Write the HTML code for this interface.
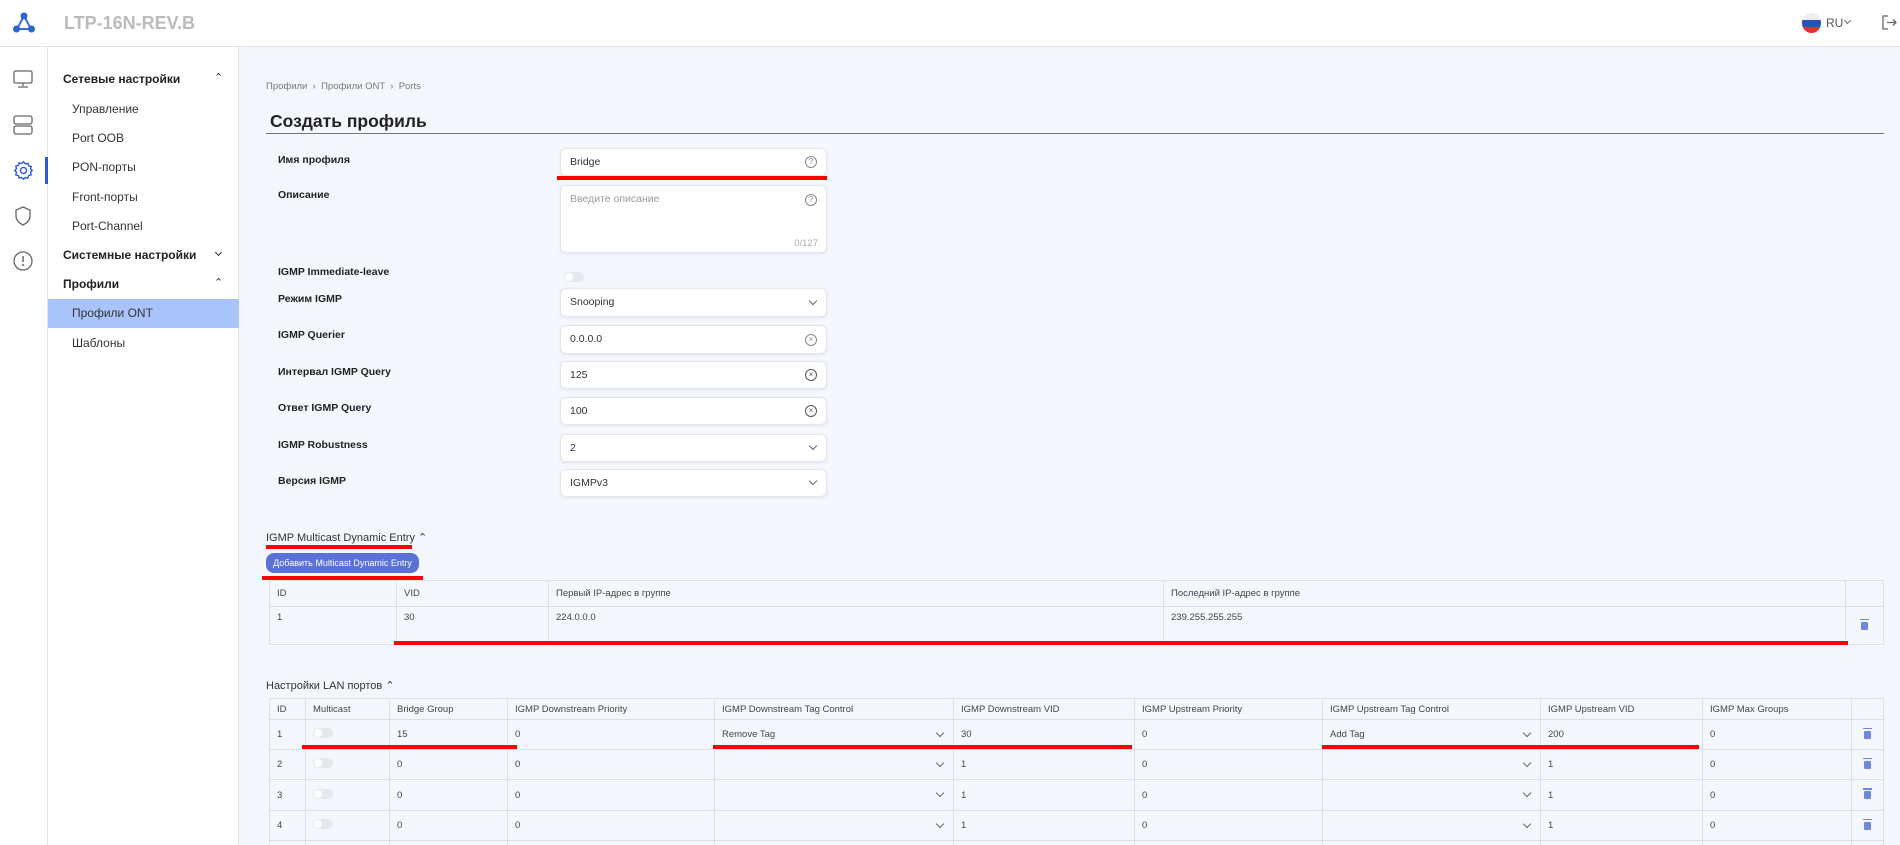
<!DOCTYPE html>
<html><head><meta charset="utf-8"><style>
*{box-sizing:border-box;margin:0;padding:0}
html,body{width:1900px;height:845px;overflow:hidden}
body{background:#f4f7fd;font-family:"Liberation Sans","Noto Sans CJK SC",sans-serif;color:#333}
#w{position:relative;width:1900px;height:845px;overflow:hidden}
.a{position:absolute}
.hdr{left:0;top:0;width:1900px;height:47px;background:#fff;border-bottom:1px solid #e2e4ea}
.icol{left:0;top:47px;width:48px;height:798px;background:#fff;border-right:1px solid #e2e4ea}
.nav{left:48px;top:47px;width:191px;height:798px;background:#fff;border-right:1px solid #e2e4ea}
.ni{position:absolute;left:24px;font-size:12px;color:#333}
.nh{position:absolute;left:15px;font-size:12px;font-weight:bold;color:#222}
.chev{position:absolute;left:166px;font-size:11px;color:#333}
.lbl{position:absolute;left:278px;font-size:10.5px;font-weight:bold;color:#222}
.inp{position:absolute;left:560px;width:267px;background:#fff;border:1px solid #e3e6ee;border-radius:6px;box-shadow:0 1px 3px rgba(0,0,0,.08);font-size:10.5px;color:#333;padding-left:9px}
.ic{position:absolute;right:9px;top:50%;margin-top:-6px;width:12px;height:12px;border:1px solid #888;border-radius:50%;font-size:8px;line-height:10px;text-align:center;color:#888}
.dd{position:absolute;right:10px;top:50%;margin-top:-5px;width:6px;height:6px;border-right:1.2px solid #666;border-bottom:1.2px solid #666;transform:rotate(45deg)}
.red{position:absolute;background:#f00;height:4px}
table{position:absolute;border-collapse:collapse;font-size:9.5px;color:#444;table-layout:fixed}
td{border:1px solid #dcdfe6;padding:0 7px;vertical-align:top}
.t2 td{vertical-align:middle}
.tg{display:inline-block;width:20px;height:10px;border-radius:5px;background:#e6e8ee;position:relative}
.tg:after{content:"";position:absolute;left:1px;top:1px;width:8px;height:8px;border-radius:50%;background:#fff}
.trash{display:inline-block;width:7px;height:8px;background:#7088dc;border-radius:1px;position:relative;margin-top:3px}
.trash:before{content:"";position:absolute;left:-1px;top:-3px;width:9px;height:1.5px;background:#7088dc}
.sc{position:relative}
</style></head><body><div id="w">
<div class="a hdr"></div>
<svg class="a" style="left:12px;top:12px" width="24" height="22" viewBox="0 0 24 22"><path d="M12 4 L5 17 L19 17 Z" fill="none" stroke="#3a6fd8" stroke-width="2"/><circle cx="12" cy="4" r="3.5" fill="#2f62cf"/><circle cx="4.5" cy="17" r="3.5" fill="#2f62cf"/><circle cx="19.5" cy="17" r="3.5" fill="#2f62cf"/></svg>
<div class="a" style="left:64px;top:13px;font-size:18px;color:#bbb;font-weight:bold">LTP-16N-REV.B</div>
<div class="a" style="left:1802px;top:13px;width:19px;height:20px;border-radius:50%;overflow:hidden"><div style="height:6.5px;background:#eee"></div><div style="height:7px;background:#2b50b8"></div><div style="height:7px;background:#e2302e"></div></div>
<div class="a" style="left:1826px;top:16px;font-size:12px;color:#555">RU</div>
<div class="a" style="left:1845px;top:18px;width:5px;height:5px;border-right:1.2px solid #666;border-bottom:1.2px solid #666;transform:rotate(45deg)"></div>
<svg class="a" style="left:1882px;top:15px" width="15" height="15" viewBox="0 0 15 15"><path d="M6 1H1v13h5M5 7.5h9M11 4.5l3 3-3 3" fill="none" stroke="#666" stroke-width="1.3"/></svg>
<div class="a icol"></div>
<svg class="a" style="left:13px;top:70px" width="20" height="18"><rect x="1" y="1" width="18" height="12" rx="1.5" fill="none" stroke="#666" stroke-width="1.3"/><path d="M10 13v3M5 17h10" stroke="#666" stroke-width="1.3"/></svg>
<svg class="a" style="left:13px;top:115px" width="20" height="20"><rect x="1" y="1" width="18" height="8" rx="2" fill="none" stroke="#666" stroke-width="1.3"/><rect x="1" y="11" width="18" height="8" rx="2" fill="none" stroke="#666" stroke-width="1.3"/></svg>
<div class="a" style="left:45px;top:157px;width:3px;height:27px;background:#2f5bd0"></div>
<svg class="a" style="left:13px;top:160px" width="21" height="21" viewBox="0 0 24 24"><path d="M12 2l2 2.5 3-.8.8 3 3 .8-.8 3L22 12l-2 2 .8 3-3 .8-.8 3-3-.8L12 22l-2-2-3 .8-.8-3-3-.8.8-3L2 12l2-2-.8-3 3-.8.8-3 3 .8z" fill="none" stroke="#2f5bd0" stroke-width="1.6"/><circle cx="12" cy="12" r="3.5" fill="none" stroke="#2f5bd0" stroke-width="1.6"/></svg>
<svg class="a" style="left:14px;top:206px" width="18" height="20"><path d="M9 1L2 4v6c0 4 3 7 7 9 4-2 7-5 7-9V4z" fill="none" stroke="#666" stroke-width="1.3"/></svg>
<svg class="a" style="left:13px;top:251px" width="20" height="20"><circle cx="10" cy="10" r="9" fill="none" stroke="#666" stroke-width="1.3"/><path d="M10 5v6" stroke="#666" stroke-width="1.5"/><circle cx="10" cy="14" r="1" fill="#666"/></svg>
<div class="a nav">
<div class="nh" style="top:25px">Сетевые настройки</div><div class="chev" style="top:24px">&#8963;</div>
<div class="ni" style="top:55px">Управление</div>
<div class="ni" style="top:84px">Port OOB</div>
<div class="ni" style="top:113px">PON-порты</div>
<div class="ni" style="top:143px">Front-порты</div>
<div class="ni" style="top:172px">Port-Channel</div>
<div class="nh" style="top:201px">Системные настройки</div><div class="a" style="left:168px;top:203px;width:5px;height:5px;border-right:1.3px solid #333;border-bottom:1.3px solid #333;transform:rotate(45deg)"></div>
<div class="nh" style="top:230px">Профили</div><div class="chev" style="top:229px">&#8963;</div>
<div class="a" style="left:0;top:252px;width:191px;height:29px;background:#a8c4fb"></div>
<div class="ni" style="top:259px">Профили ONT</div>
<div class="ni" style="top:289px">Шаблоны</div>
</div>
<div class="a" style="left:266px;top:81px;font-size:9.5px;color:#777">Профили &nbsp;&#8250;&nbsp; Профили ONT &nbsp;&#8250;&nbsp; Ports</div>
<div class="a" style="left:270px;top:111px;font-size:17.5px;color:#222;font-weight:bold">Создать профиль</div>
<div class="a" style="left:266px;top:133px;width:1618px;height:1px;background:#777"></div>

<div class="lbl" style="top:154px">Имя профиля</div>
<div class="inp" style="top:148px;height:28px;line-height:26px">Bridge<span class="ic">?</span></div>
<div class="red" style="left:557px;top:176px;width:270px"></div>
<div class="lbl" style="top:189px">Описание</div>
<div class="inp" style="top:185px;height:68px;line-height:26px;color:#999">Введите описание<span class="ic" style="top:14px">?</span><span style="position:absolute;right:8px;bottom:0;font-size:9.5px;color:#aaa;line-height:16px">0/127</span></div>
<div class="lbl" style="top:266px">IGMP Immediate-leave</div>
<div class="a tg" style="left:564px;top:269px"></div>
<div class="lbl" style="top:293px">Режим IGMP</div>
<div class="inp" style="top:288px;height:29px;line-height:27px">Snooping<span class="dd"></span></div>
<div class="lbl" style="top:329px">IGMP Querier</div>
<div class="inp" style="top:325px;height:29px;line-height:27px">0.0.0.0<span class="ic">×</span></div>
<div class="lbl" style="top:366px">Интервал IGMP Query</div>
<div class="inp" style="top:361px;height:28px;line-height:26px">125<span class="ic" style="border-color:#555;color:#555">×</span></div>
<div class="lbl" style="top:402px">Ответ IGMP Query</div>
<div class="inp" style="top:397px;height:28px;line-height:26px">100<span class="ic" style="border-color:#555;color:#555">×</span></div>
<div class="lbl" style="top:439px">IGMP Robustness</div>
<div class="inp" style="top:434px;height:28px;line-height:26px">2<span class="dd"></span></div>
<div class="lbl" style="top:475px">Версия IGMP</div>
<div class="inp" style="top:469px;height:28px;line-height:26px">IGMPv3<span class="dd"></span></div>

<div class="a" style="left:266px;top:531px;font-size:11px;color:#333">IGMP Multicast Dynamic Entry &#8963;</div>
<div class="red" style="left:266px;top:545px;width:146px"></div>
<div class="a" style="left:266px;top:553px;width:153px;height:20px;background:#5a72d8;border-radius:8px;color:#fff;font-size:9px;line-height:20px;text-align:center">Добавить Multicast Dynamic Entry</div>
<div class="red" style="left:262px;top:576px;width:161px"></div>
<table style="left:269px;top:580px;width:1614px">
<colgroup><col style="width:127px"><col style="width:152px"><col style="width:615px"><col style="width:682px"><col style="width:38px"></colgroup>
<tr style="height:26px"><td style="vertical-align:middle">ID</td><td style="vertical-align:middle">VID</td><td style="vertical-align:middle">Первый IP-адрес в группе</td><td style="vertical-align:middle">Последний IP-адрес в группе</td><td></td></tr>
<tr style="height:38px"><td style="padding-top:5px">1</td><td style="padding-top:5px">30</td><td style="padding-top:5px">224.0.0.0</td><td style="padding-top:5px">239.255.255.255</td><td style="vertical-align:middle;text-align:center"><span class="trash"></span></td></tr>
</table>
<div class="red" style="left:394px;top:641px;width:1454px"></div>

<div class="a" style="left:266px;top:679px;font-size:11px;color:#333">Настройки LAN портов &#8963;</div>
<table class="t2" style="left:269px;top:698px;width:1614px">
<colgroup><col style="width:36px"><col style="width:84px"><col style="width:118px"><col style="width:207px"><col style="width:239px"><col style="width:181px"><col style="width:188px"><col style="width:218px"><col style="width:162px"><col style="width:149px"><col style="width:32px"></colgroup>
<tr style="height:21px"><td>ID</td><td>Multicast</td><td>Bridge Group</td><td>IGMP Downstream Priority</td><td>IGMP Downstream Tag Control</td><td>IGMP Downstream VID</td><td>IGMP Upstream Priority</td><td>IGMP Upstream Tag Control</td><td>IGMP Upstream VID</td><td>IGMP Max Groups</td><td></td></tr>
<tr style="height:30px"><td>1</td><td><span class="tg"></span></td><td>15</td><td>0</td><td class="sc">Remove Tag<span class="dd"></span></td><td>30</td><td>0</td><td class="sc">Add Tag<span class="dd"></span></td><td>200</td><td>0</td><td style="text-align:center"><span class="trash"></span></td></tr>
<tr style="height:30px"><td>2</td><td><span class="tg"></span></td><td>0</td><td>0</td><td class="sc"><span class="dd"></span></td><td>1</td><td>0</td><td class="sc"><span class="dd"></span></td><td>1</td><td>0</td><td style="text-align:center"><span class="trash"></span></td></tr>
<tr style="height:31px"><td>3</td><td><span class="tg"></span></td><td>0</td><td>0</td><td class="sc"><span class="dd"></span></td><td>1</td><td>0</td><td class="sc"><span class="dd"></span></td><td>1</td><td>0</td><td style="text-align:center"><span class="trash"></span></td></tr>
<tr style="height:30px"><td>4</td><td><span class="tg"></span></td><td>0</td><td>0</td><td class="sc"><span class="dd"></span></td><td>1</td><td>0</td><td class="sc"><span class="dd"></span></td><td>1</td><td>0</td><td style="text-align:center"><span class="trash"></span></td></tr>
<tr style="height:30px"><td></td><td></td><td></td><td></td><td></td><td></td><td></td><td></td><td></td><td></td><td></td></tr>
</table>
<div class="red" style="left:302px;top:745px;width:215px"></div>
<div class="red" style="left:713px;top:745px;width:419px"></div>
<div class="red" style="left:1322px;top:745px;width:377px"></div>
</div></body></html>
